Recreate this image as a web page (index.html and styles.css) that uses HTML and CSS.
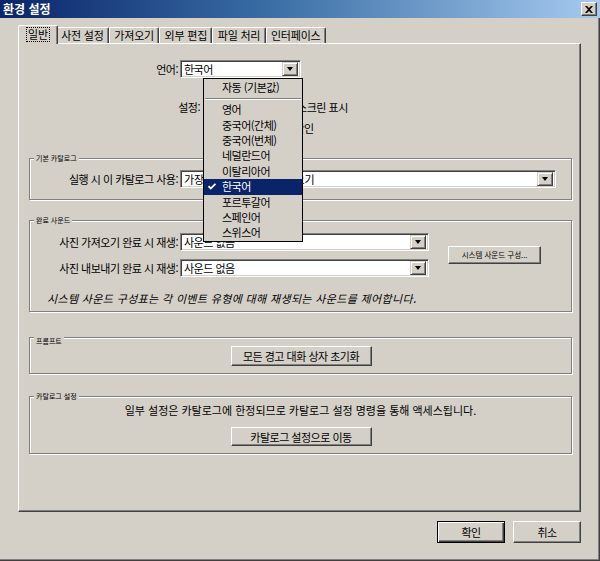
FILE: index.html
```html
<!DOCTYPE html>
<html lang="ko">
<head>
<meta charset="utf-8">
<title>환경 설정</title>
<link rel="stylesheet" href="styles.css">
</head>
<body>
<div class="window">
  <div class="titlebar">
    <span class="title">환경 설정</span>
    <span class="close"><svg width="8" height="7" viewBox="0 0 8 7"><path d="M0 0h2l2 2 2-2h2L5 3.5 8 7H6L4 5 2 7H0l3-3.5z" fill="#000"/></svg></span>
  </div>
  <div class="client">
    <div class="tabs">
      <div class="tab active"><span class="focus">일반</span></div>
      <div class="tab">사전 설정</div>
      <div class="tab">가져오기</div>
      <div class="tab">외부 편집</div>
      <div class="tab">파일 처리</div>
      <div class="tab">인터페이스</div>
    </div>
    <div class="panel">
      <div class="row lang-row">
        <span class="lbl lbl-lang">언어:</span>
        <div class="select sel-lang"><span class="val">한국어</span><span class="arrow"></span></div>
      </div>
      <div class="settings">
        <span class="lbl lbl-set">설정:</span>
        <div class="checks">
          <div class="check"><span class="box"></span><span>시작 시 스플래시 스크린 표시</span></div>
          <div class="check"><span class="box"></span><span>업데이트를 자동 확인</span></div>
        </div>
      </div>

      <div class="group g-cat">
        <div class="legend">기본 카탈로그</div>
        <div class="row grp-row cat-row">
          <span class="lbl lbl-grp">실행 시 이 카탈로그 사용:</span>
          <div class="select sel-cat"><span class="val">가장 최근 카탈로그 불러오기</span><span class="arrow"></span></div>
        </div>
      </div>

      <div class="group g-sound">
        <div class="legend">완료 사운드</div>
        <div class="sound-grid">
          <span class="lbl lbl-grp">사진 가져오기 완료 시 재생:</span>
          <div class="select sel-sound"><span class="val">사운드 없음</span><span class="arrow"></span></div>
          <button class="btn btn-sys">시스템 사운드 구성...</button>
          <span class="lbl lbl-grp">사진 내보내기 완료 시 재생:</span>
          <div class="select sel-sound"><span class="val">사운드 없음</span><span class="arrow"></span></div>
        </div>
        <p class="note">시스템 사운드 구성표는 각 이벤트 유형에 대해 재생되는 사운드를 제어합니다.</p>
      </div>

      <div class="group g-prompt">
        <div class="legend">프롬프트</div>
        <button class="btn btn-wide btn-reset">모든 경고 대화 상자 초기화</button>
      </div>

      <div class="group g-catset">
        <div class="legend">카탈로그 설정</div>
        <p class="info">일부 설정은 카탈로그에 한정되므로 카탈로그 설정 명령을 통해 액세스됩니다.</p>
        <button class="btn btn-wide btn-go">카탈로그 설정으로 이동</button>
      </div>
    </div>
    <div class="footer">
      <button class="btn btn-dlg default">확인</button>
      <button class="btn btn-dlg">취소</button>
    </div>
  </div>

  <ul class="dropdown">
    <li class="item first">자동 (기본값)</li>
    <li class="sep"></li>
    <li class="item">영어</li>
    <li class="item">중국어(간체)</li>
    <li class="item">중국어(번체)</li>
    <li class="item">네덜란드어</li>
    <li class="item">이탈리아어</li>
    <li class="item selected"><svg class="tick" width="8" height="7" viewBox="0 0 8 7"><path d="M0.5 3.2 L2.8 5.5 L7.5 0.8" fill="none" stroke="#fff" stroke-width="1.8"/></svg>한국어</li>
    <li class="item">포르투갈어</li>
    <li class="item">스페인어</li>
    <li class="item">스위스어</li>
  </ul>
</div>
</body>
</html>
```

FILE: styles.css
```css
* { box-sizing: border-box; }
html, body { margin: 0; padding: 0; }
body {
  width: 600px;
  height: 561px;
  overflow: hidden;
  background: #d4d0c8;
  font-family: "Noto Sans CJK KR", "Noto Sans", sans-serif;
  font-size: 11px;
  letter-spacing: -0.5px;
  color: #000;
}
.window {
  position: relative;
  width: 600px;
  height: 561px;
  display: flex;
  flex-direction: column;
  background: #d4d0c8;
}

/* title bar */
.titlebar {
  height: 18px;
  display: flex;
  align-items: center;
  padding: 0 3px 0 3px;
  background: linear-gradient(to right, #0a246a 0%, #3a6ea5 45%, #a6caf0 100%);
}
.title {
  color: #fff;
  font-weight: bold;
  font-size: 12px;
  letter-spacing: 0;
  line-height: 16px;
}
.close {
  margin-left: auto;
  width: 16px;
  height: 14px;
  display: flex;
  align-items: center;
  justify-content: center;
  background: #d4d0c8;
  border: 1px solid;
  border-color: #fff #404040 #404040 #fff;
  box-shadow: inset -1px -1px 0 #808080;
}

/* client area */
.client {
  flex: 1;
  padding: 7px 18px 0 18px;
  border-right: 1px solid #404040;
  border-bottom: 1px solid #404040;
  box-shadow: inset -1px -1px 0 #808080;
}

/* tabs */
.tabs {
  height: 18px;
  display: flex;
  align-items: flex-end;
  padding-left: 2px;
  position: relative;
  z-index: 1;
}
.tab {
  height: 16px;
  padding: 0 4.3px;
  line-height: 15px;
  letter-spacing: -0.2px;
  border-top: 1px solid #fff;
  border-left: 1px solid #fff;
  border-right: 1px solid #404040;
  box-shadow: inset -1px 0 0 #808080;
  border-radius: 2px 2px 0 0;
  background: #d4d0c8;
  white-space: nowrap;
}
.tab.active {
  height: 19px;
  margin: 0 -2px -1px -2px;
  padding: 1px 8px 0 8px;
  position: relative;
  z-index: 2;
}
.focus {
  display: inline-block;
  line-height: 13px;
  padding: 0 1px;
  outline: 1px dotted #000;
  outline-offset: 0;
}

/* panel */
.panel {
  height: 469px;
  border-top: 1px solid #fff;
  border-left: 1px solid #fff;
  border-right: 1px solid #404040;
  border-bottom: 1px solid #404040;
  box-shadow: inset -1px -1px 0 #808080;
}

.row { display: flex; align-items: center; }
.lbl {
  text-align: right;
  white-space: nowrap;
  flex: none;
}
.lbl-lang { width: 161px; padding-right: 2px; }
.lang-row { margin-top: 16px; }

/* select */
.select {
  display: flex;
  align-items: center;
  height: 18px;
  padding: 2px;
  background: #fff;
  border: 1px solid;
  border-color: #808080 #fff #fff #808080;
  box-shadow: inset 1px 1px 0 #404040, inset -1px -1px 0 #d4d0c8;
  flex: none;
}
.val {
  flex: 1;
  padding-left: 1px;
  line-height: 14px;
  white-space: nowrap;
  overflow: hidden;
}
.arrow {
  width: 16px;
  height: 14px;
  flex: none;
  display: flex;
  align-items: center;
  justify-content: center;
  background: #d4d0c8;
  border: 1px solid;
  border-color: #d4d0c8 #404040 #404040 #d4d0c8;
  box-shadow: inset 1px 1px 0 #fff, inset -1px -1px 0 #808080;
}
.arrow::after {
  content: "";
  width: 0;
  height: 0;
  border-left: 3.5px solid transparent;
  border-right: 3.5px solid transparent;
  border-top: 4px solid #000;
}
.sel-lang { width: 121px; }
.sel-cat { width: 376px; }
.sel-cat .val { letter-spacing: 0; }
.sel-sound { width: 249px; }

/* settings */
.settings {
  display: flex;
  margin-top: 21px;
}
.lbl-set { width: 186px; padding-right: 5px; line-height: 16px; }
.checks { display: flex; flex-direction: column; gap: 5px; }
.check {
  display: flex;
  align-items: center;
  height: 16px;
  white-space: nowrap;
}
.box {
  width: 13px;
  height: 13px;
  margin-right: 4px;
  background: #fff;
  border: 1px solid;
  border-color: #808080 #fff #fff #808080;
  box-shadow: inset 1px 1px 0 #404040;
}

/* group boxes */
.group {
  margin: 0 8px 0 10px;
  border: 1px solid #808080;
  box-shadow: 1px 1px 0 #fff, inset 1px 1px 0 #fff;
}
.legend {
  width: fit-content;
  height: 9px;
  margin: -5px 0 0 4px;
  padding: 0 2px;
  background: #d4d0c8;
  font-size: 7px;
  line-height: 9px;
  letter-spacing: 0;
  white-space: nowrap;
}
.lbl-grp { width: 150px; padding-right: 2px; }

.g-cat { margin-top: 22px; padding-bottom: 11px; }
.cat-row { margin-top: 7px; }

.g-sound { margin-top: 20px; padding-bottom: 6px; }
.sound-grid {
  margin-top: 8px;
  display: grid;
  grid-template-columns: 150px 249px 112px;
  grid-template-rows: 18px 18px;
  row-gap: 8px;
  align-items: center;
}
.note {
  margin: 14px 0 0 17px;
  line-height: 14px;
  font-style: italic;
  letter-spacing: 0.35px;
  white-space: nowrap;
}

.g-prompt {
  margin-top: 25px;
  padding: 4px 0 7px;
  display: flex;
  flex-direction: column;
}
.g-catset {
  margin-top: 22px;
  padding-bottom: 7px;
  display: flex;
  flex-direction: column;
}
.info {
  margin: 2px 0 0;
  line-height: 14px;
  text-align: center;
  letter-spacing: 0;
  white-space: nowrap;
}

/* buttons */
.btn {
  font-family: inherit;
  font-size: 11px;
  letter-spacing: inherit;
  color: #000;
  background: #d4d0c8;
  border: 1px solid;
  border-color: #fff #404040 #404040 #fff;
  box-shadow: inset -1px -1px 0 #808080;
  padding: 0;
  margin: 0;
  line-height: 14px;
  white-space: nowrap;
}
.btn-wide {
  width: 141px;
  align-self: center;
  margin-left: 1px;
}
.btn-reset { height: 20px; }
.btn-go { height: 19px; margin-top: 10px; }
.btn-sys {
  grid-column: 3;
  grid-row: 1 / span 2;
  justify-self: end;
  width: 93px;
  height: 18px;
  font-size: 7.5px;
  letter-spacing: 0;
}

.footer {
  display: flex;
  justify-content: flex-end;
  gap: 8px;
  margin-top: 9px;
}
.btn-dlg { width: 68px; height: 22px; }
.btn-dlg.default {
  border: 1px solid #000;
  box-shadow: inset 1px 1px 0 #fff, inset -1px -1px 0 #404040, inset -2px -2px 0 #808080;
}

/* dropdown list (open overlay) */
.dropdown {
  position: absolute;
  left: 203px;
  top: 78px;
  width: 100px;
  height: 164px;
  margin: 0;
  padding: 0;
  list-style: none;
  background: #d4d0c8;
  border: 1px solid #000;
  z-index: 5;
}
.item {
  height: 15.4px;
  line-height: 15.4px;
  padding-left: 18px;
  white-space: nowrap;
  position: relative;
}
.item.first { height: 16px; line-height: 16px; }
.sep {
  height: 7.3px;
  margin: 0 1px;
  padding-top: 3px;
}
.sep::before {
  content: "";
  display: block;
  height: 1px;
  background: #808080;
  box-shadow: 0 1px 0 #fff;
}
.item.selected {
  background: #0a246a;
  color: #fff;
}
.tick {
  position: absolute;
  left: 4px;
  top: 4px;
}
```
